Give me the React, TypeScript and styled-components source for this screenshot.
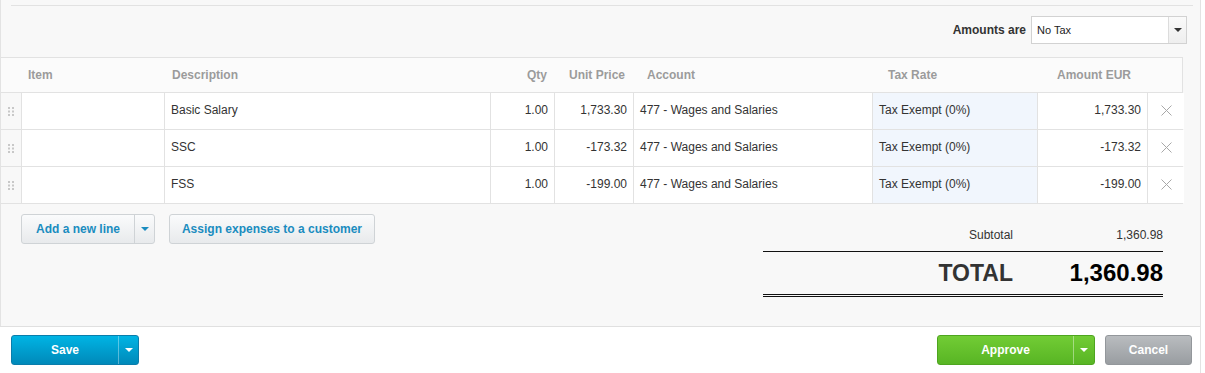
import React from "react";
import styled, { createGlobalStyle, css } from "styled-components";

const Global = createGlobalStyle`
  html, body { margin: 0; padding: 0; background: #ffffff; }
  body { font-family: "Liberation Sans", Arial, Helvetica, sans-serif; font-size: 12px; color: #333; }
  * { box-sizing: border-box; }
`;

const Wrapper = styled.div`
  width: 1201px;
  border-right: 1px solid #e3e3e3;
`;

const Panel = styled.div`
  background: #f8f8f8;
  border-left: 1px solid #e3e3e3;
  height: 326px;
  padding-top: 5px;
  display: flex;
  flex-direction: column;
`;

const TopRule = styled.div`
  height: 1px;
  background: #e2e2e2;
  margin: 0 7px 0 10px;
`;

const AmountsRow = styled.div`
  display: flex;
  justify-content: flex-end;
  align-items: center;
  gap: 5px;
  margin: 10px 13px 0 0;
`;

const AmountsLabel = styled.span`
  font-weight: bold;
  font-size: 12px;
  color: #333;
`;

const SelectBox = styled.div`
  width: 156px;
  height: 28px;
  background: #fff;
  border: 1px solid #d2d2d2;
  display: flex;
  align-items: stretch;
`;

const SelectValue = styled.div`
  flex: 1;
  display: flex;
  align-items: center;
  padding-left: 5px;
  font-size: 11px;
  color: #222;
`;

const SelectArrow = styled.div`
  width: 18px;
  border-left: 1px solid #dcdcdc;
  background: linear-gradient(#fafafa, #eeeeee);
  display: flex;
  align-items: center;
  justify-content: center;
`;

const Caret = styled.span<{ $color: string }>`
  width: 0;
  height: 0;
  border-left: 4px solid transparent;
  border-right: 4px solid transparent;
  border-top: 4px solid ${(p) => p.$color};
`;

const cols = "21px 143px 326px 64px 79px 239px 165px 110px 36px";

const Table = styled.div`
  margin: 13px 17px 0 0;
  border-top: 1px solid #e2e2e2;
  border-right: 1px solid #e2e2e2;
  display: flex;
  flex-direction: column;
`;

const HeaderRow = styled.div`
  display: grid;
  grid-template-columns: ${cols};
  height: 35px;
  background: #fbfbfb;
  border-bottom: 1px solid #e2e2e2;
`;

const HeadCell = styled.div<{ $align?: "left" | "right"; $pad?: number }>`
  display: flex;
  align-items: center;
  justify-content: ${(p) => (p.$align === "right" ? "flex-end" : "flex-start")};
  ${(p) => (p.$align === "right" ? css`padding-right: ${p.$pad ?? 8}px;` : css`padding-left: ${p.$pad ?? 8}px;`)}
  font-weight: bold;
  font-size: 12px;
  color: #9b9b9b;
`;

const BodyRow = styled.div`
  display: grid;
  grid-template-columns: ${cols};
  height: 37px;
  border-bottom: 1px solid #e2e2e2;
`;

const Cell = styled.div<{ $align?: "left" | "right" | "center"; $tax?: boolean; $last?: boolean }>`
  display: flex;
  align-items: center;
  justify-content: ${(p) =>
    p.$align === "right" ? "flex-end" : p.$align === "center" ? "center" : "flex-start"};
  padding: 0 6px 2px;
  border-right: ${(p) => (p.$last ? "none" : "1px solid #e2e2e2")};
  background: ${(p) => (p.$tax ? "#f1f6fd" : "#ffffff")};
  font-size: 12px;
  color: #333;
  white-space: nowrap;
`;

const HandleCell = styled(Cell)`
  background: #f8f8f8;
  padding: 0 0 0 7px;
`;

const Below = styled.div`
  display: flex;
  justify-content: space-between;
  align-items: flex-start;
  margin-right: 37px;
`;

const ButtonGroup = styled.div`
  display: flex;
  gap: 14px;
  margin: 10px 0 0 20px;
`;

const LightButton = styled.button`
  height: 30px;
  display: flex;
  align-items: stretch;
  padding: 0;
  border: 1px solid #cfd3d6;
  border-radius: 3px;
  background: linear-gradient(#fafbfc, #e8eaec);
  color: #1a8cbf;
  font-family: inherit;
  font-weight: bold;
  font-size: 12px;
  cursor: pointer;
`;

const BtnLabel = styled.span<{ $w: number }>`
  width: ${(p) => p.$w}px;
  display: flex;
  align-items: center;
  justify-content: center;
`;

const SplitPart = styled.span<{ $w: number; $line: string }>`
  width: ${(p) => p.$w}px;
  border-left: 1px solid ${(p) => p.$line};
  display: flex;
  align-items: center;
  justify-content: center;
`;

const Totals = styled.div`
  width: 400px;
  margin-top: 22px;
  display: flex;
  flex-direction: column;
`;

const SubRow = styled.div`
  display: grid;
  grid-template-columns: 250px 150px;
  line-height: 18px;
  padding-bottom: 7px;
  border-bottom: 1px solid #111;
  font-size: 12px;
  color: #333;
`;

const TotalRow = styled.div`
  display: grid;
  grid-template-columns: 250px 150px;
  height: 45px;
  line-height: 42px;
  border-bottom: 3px double #111;
  font-weight: bold;
`;

const RightText = styled.span<{ $size?: number; $color?: string }>`
  text-align: right;
  ${(p) => p.$size && css`font-size: ${p.$size}px;`}
  ${(p) => p.$color && css`color: ${p.$color};`}
`;

const Footer = styled.div`
  border-top: 1px solid #e0e0e0;
  background: #fff;
  height: 47px;
  display: flex;
  align-items: flex-start;
  padding: 8px 8px 0 11px;
  gap: 10px;
`;

const ColorButton = styled.button<{ $variant: "blue" | "green" | "grey" }>`
  height: 30px;
  display: flex;
  align-items: stretch;
  padding: 0;
  border-radius: 3px;
  color: #fff;
  font-family: inherit;
  font-weight: bold;
  font-size: 12px;
  cursor: pointer;
  ${(p) =>
    p.$variant === "blue"
      ? css`
          background: linear-gradient(#00b4e4, #0089b9);
          border: 1px solid #0a7dab;
        `
      : p.$variant === "green"
      ? css`
          background: linear-gradient(#72cc35, #58b524);
          border: 1px solid #4ea51f;
        `
      : css`
          background: linear-gradient(#b9bcbf, #999da1);
          border: 1px solid #93979b;
        `}
`;

const Spacer = styled.div`
  flex: 1;
`;

const Dots = () => (
  <svg width="6" height="9" viewBox="0 0 6 9">
    {[0, 1, 2].map((r) =>
      [0, 1].map((c) => (
        <rect key={`${r}-${c}`} x={c * 4} y={r * 3.5} width="2" height="2" fill="#c8c8c8" />
      ))
    )}
  </svg>
);

const XIcon = () => (
  <svg width="11" height="11" viewBox="0 0 11 11">
    <path d="M0.5 0.5 L10.5 10.5 M10.5 0.5 L0.5 10.5" stroke="#a8a8a8" strokeWidth="1" fill="none" />
  </svg>
);

const lines = [
  { desc: "Basic Salary", qty: "1.00", price: "1,733.30", amount: "1,733.30" },
  { desc: "SSC", qty: "1.00", price: "-173.32", amount: "-173.32" },
  { desc: "FSS", qty: "1.00", price: "-199.00", amount: "-199.00" },
];

export default function App() {
  return (
    <>
      <Global />
      <Wrapper>
        <Panel>
          <TopRule />
          <AmountsRow>
            <AmountsLabel>Amounts are</AmountsLabel>
            <SelectBox>
              <SelectValue>No Tax</SelectValue>
              <SelectArrow>
                <Caret $color="#333" />
              </SelectArrow>
            </SelectBox>
          </AmountsRow>
          <Table>
            <HeaderRow>
              <HeadCell />
              <HeadCell $pad={6}>Item</HeadCell>
              <HeadCell $pad={7}>Description</HeadCell>
              <HeadCell $align="right" $pad={8}>Qty</HeadCell>
              <HeadCell $align="right" $pad={9}>Unit Price</HeadCell>
              <HeadCell $pad={13}>Account</HeadCell>
              <HeadCell $pad={15}>Tax Rate</HeadCell>
              <HeadCell $align="right" $pad={17}>Amount EUR</HeadCell>
              <HeadCell />
            </HeaderRow>
            {lines.map((l) => (
              <BodyRow key={l.desc}>
                <HandleCell>
                  <Dots />
                </HandleCell>
                <Cell />
                <Cell>{l.desc}</Cell>
                <Cell $align="right">{l.qty}</Cell>
                <Cell $align="right">{l.price}</Cell>
                <Cell>477 - Wages and Salaries</Cell>
                <Cell $tax>Tax Exempt (0%)</Cell>
                <Cell $align="right">{l.amount}</Cell>
                <Cell $align="center" $last>
                  <XIcon />
                </Cell>
              </BodyRow>
            ))}
          </Table>
          <Below>
            <ButtonGroup>
              <LightButton>
                <BtnLabel $w={112}>Add a new line</BtnLabel>
                <SplitPart $w={20} $line="#cfd3d6">
                  <Caret $color="#1a8cbf" />
                </SplitPart>
              </LightButton>
              <LightButton>
                <BtnLabel $w={204}>Assign expenses to a customer</BtnLabel>
              </LightButton>
            </ButtonGroup>
            <Totals>
              <SubRow>
                <RightText>Subtotal</RightText>
                <RightText>1,360.98</RightText>
              </SubRow>
              <TotalRow>
                <RightText $size={23} $color="#333">TOTAL</RightText>
                <RightText $size={24} $color="#000">1,360.98</RightText>
              </TotalRow>
            </Totals>
          </Below>
        </Panel>
        <Footer>
          <ColorButton $variant="blue">
            <BtnLabel $w={106}>Save</BtnLabel>
            <SplitPart $w={20} $line="rgba(255,255,255,0.35)">
              <Caret $color="#fff" />
            </SplitPart>
          </ColorButton>
          <Spacer />
          <ColorButton $variant="green">
            <BtnLabel $w={135}>Approve</BtnLabel>
            <SplitPart $w={21} $line="rgba(255,255,255,0.4)">
              <Caret $color="#fff" />
            </SplitPart>
          </ColorButton>
          <ColorButton $variant="grey">
            <BtnLabel $w={85}>Cancel</BtnLabel>
          </ColorButton>
        </Footer>
      </Wrapper>
    </>
  );
}
